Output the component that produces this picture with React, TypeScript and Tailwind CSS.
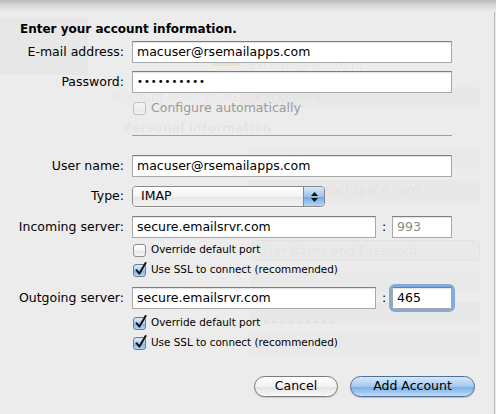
import React from "react";

const FONT = "font-['DejaVu_Sans',sans-serif]";

function Check({ checked, disabled }: { checked?: boolean; disabled?: boolean }) {
  return (
    <span
      className={`relative inline-block h-[13px] w-[13px] shrink-0 rounded-[3px] border ${
        checked
          ? "border-[#5f7d9e] bg-[linear-gradient(#dcebfa,#a9cbee_50%,#7fb1e6_51%,#b8d6f4)]"
          : "border-[#8e8e8e] bg-[linear-gradient(#ffffff,#f1f1f1_50%,#e4e4e4_51%,#f7f7f7)]"
      } ${disabled ? "opacity-45" : ""}`}
    >
      {checked && (
        <svg className="absolute -top-[3px] left-[1px]" width="12" height="14" viewBox="0 0 12 14">
          <path d="M1.5 8.2 L4.4 11.6 L10.6 1" fill="none" stroke="#111" strokeWidth="2" strokeLinecap="round" strokeLinejoin="round" />
        </svg>
      )}
    </span>
  );
}

function Field({ value, className = "", muted, dots }: { value: string; className?: string; muted?: boolean; dots?: boolean }) {
  return (
    <div
      className={`flex h-[22px] items-center border border-[#a8a8a8] border-t-[#7e7e7e] bg-white pl-[4px] shadow-[inset_0_1px_1px_rgba(0,0,0,0.12)] ${className}`}
    >
      <span className={`leading-none ${muted ? "text-[#8a8a8a]" : "text-black"} ${dots ? "tracking-[1px] text-[10px]" : "text-[12.5px]"}`}>
        {value}
      </span>
    </div>
  );
}

function Row({ label, children, className = "" }: { label?: string; children: React.ReactNode; className?: string }) {
  return (
    <div className={`flex items-center ${className}`}>
      <div className="w-[125px] shrink-0 whitespace-nowrap pr-[1px] text-right text-[12.5px] text-black">{label}</div>
      <div className="ml-[7px] flex items-center">{children}</div>
    </div>
  );
}

function CheckRow({ label, checked, disabled, className = "" }: { label: string; checked?: boolean; disabled?: boolean; className?: string }) {
  return (
    <div className={`ml-[133px] flex h-[16px] items-center gap-[5px] ${className}`}>
      <Check checked={checked} disabled={disabled} />
      <span className={disabled ? "text-[12.5px] leading-[14px] text-[#9a9a9a]" : "text-[10.4px] text-black"}>{label}</span>
    </div>
  );
}

export default function App() {
  return (
    <div className={`relative h-[414px] w-[496px] overflow-hidden bg-[#ececec] ${FONT}`}>
      {/* ghosted window behind the sheet */}
      <div className="pointer-events-none absolute inset-0 text-[12.5px] leading-[12px] text-black/[0.045]" aria-hidden="true">
        <div className="absolute left-0 top-[17px] h-[58px] w-[88px] bg-[#e7e7e7]" />
        <div className="absolute left-[212px] top-[61px] h-[5px] w-[28px] rounded bg-[#f0c890]/30" />
        <div className="absolute left-[248px] top-[59px]">Exchange Account</div>
        <div className="absolute left-[113px] top-[91px]">Account description:</div>
        <div className="absolute left-[240px] top-[87px] h-[21px] w-[240px] rounded-[2px] bg-black/[0.015]" />
        <div className="absolute left-[255px] top-[91px]">Rackspace</div>
        <div className="absolute left-[123px] top-[122px] font-bold">Personal information</div>
        <div className="absolute left-[248px] top-[148px] h-[21px] w-[232px] bg-black/[0.012]" />
        <div className="absolute left-[248px] top-[180px] h-[21px] w-[232px] bg-black/[0.015]" />
        <div className="absolute left-[325px] top-[184px]">rackspace.com</div>
        <div className="absolute left-[252px] top-[240px] h-[21px] w-[228px] rounded-[4px] border border-black/[0.03] bg-black/[0.012]" />
        <div className="absolute left-[258px] top-[245px]">User Name and Password</div>
        <div className="absolute left-[250px] top-[271px] h-[21px] w-[230px] bg-black/[0.012]" />
        <div className="absolute left-[250px] top-[302px] h-[21px] w-[230px] bg-black/[0.015]" />
        <div className="absolute left-[262px] top-[317px] tracking-[1px]">•••••••••</div>
        <div className="absolute left-[250px] top-[333px] h-[21px] w-[230px] bg-black/[0.012]" />
      </div>
      <div className="absolute bottom-0 right-[1px] top-[10px] w-px bg-[#b8b8b8]" />
      <div className="absolute left-0 right-0 top-0 h-[12px] bg-[linear-gradient(#b9b9b9,#d6d6d6_40%,#ececec)]" />

      <div className="relative pt-[21px]">
        <div className="ml-[20px] h-[16px] text-[12px] font-bold leading-[16px] text-black">Enter your account information.</div>

        <Row label="E-mail address:" className="mt-[4px]">
          <Field value="macuser@rsemailapps.com" className="w-[320px]" />
        </Row>
        <Row label="Password:" className="mt-[8px]">
          <Field value="••••••••••" className="w-[320px]" dots />
        </Row>
        <CheckRow label="Configure automatically" disabled className="mt-[7px]" />

        <div className="ml-[132px] mt-[19px] h-px w-[320px] bg-[#a0a0a0]" />

        <Row label="User name:" className="mt-[19px]">
          <Field value="macuser@rsemailapps.com" className="w-[320px]" />
        </Row>
        <Row label="Type:" className="mt-[9px]">
          <div className="flex h-[21px] w-[193px] overflow-hidden rounded-[4px] border border-[#8a8a8a] shadow-[0_1px_0_rgba(255,255,255,0.6)]">
            <div className="flex flex-1 items-center bg-[linear-gradient(#ffffff,#f3f3f3_50%,#e6e6e6_51%,#f4f4f4)] pl-[8px] text-[12.5px] text-black">
              IMAP
            </div>
            <div className="flex w-[21px] flex-col items-center justify-center gap-[2px] border-l border-[#6d8fb5] bg-[linear-gradient(#d7e8f9,#9cc3ec_50%,#73a9e2_51%,#b6d6f5)]">
              <svg width="7" height="4" viewBox="0 0 7 4"><path d="M3.5 0 L7 4 L0 4 Z" fill="#111" /></svg>
              <svg width="7" height="4" viewBox="0 0 7 4"><path d="M0 0 L7 0 L3.5 4 Z" fill="#111" /></svg>
            </div>
          </div>
        </Row>
        <Row label="Incoming server:" className="mt-[9px]">
          <Field value="secure.emailsrvr.com" className="w-[244px]" />
          <span className="w-[16px] text-center text-[12.5px] text-black">:</span>
          <Field value="993" className="w-[60px]" muted />
        </Row>
        <CheckRow label="Override default port" className="mt-[4px]" />
        <CheckRow label="Use SSL to connect (recommended)" checked className="mt-[4px]" />

        <Row label="Outgoing server:" className="mt-[9px]">
          <Field value="secure.emailsrvr.com" className="w-[244px]" />
          <span className="w-[16px] text-center text-[12.5px] text-black">:</span>
          <div className="rounded-[3px] shadow-[0_0_0_3px_rgba(110,160,215,0.85)]">
            <Field value="465" className="w-[60px]" />
          </div>
        </Row>
        <CheckRow label="Override default port" checked className="mt-[6px]" />
        <CheckRow label="Use SSL to connect (recommended)" checked className="mt-[4px]" />

        <div className="mr-[21px] mt-[25px] flex justify-end gap-[12px]">
          <button className="flex h-[21px] w-[84px] items-center justify-center rounded-full border border-[#7b7b7b] bg-[linear-gradient(#ffffff,#f2f2f2_50%,#e3e3e3_51%,#f8f8f8)] text-[12.5px] text-black shadow-[0_1px_1px_rgba(0,0,0,0.15)]">
            Cancel
          </button>
          <button className="flex h-[21px] w-[125px] items-center justify-center rounded-full border border-[#4e6f98] bg-[linear-gradient(#d6e8fa,#a3c9ef_50%,#75ade6_51%,#bfdcf7)] text-[12.5px] text-black shadow-[0_1px_1px_rgba(0,0,0,0.2)]">
            Add Account
          </button>
        </div>
      </div>
    </div>
  );
}
